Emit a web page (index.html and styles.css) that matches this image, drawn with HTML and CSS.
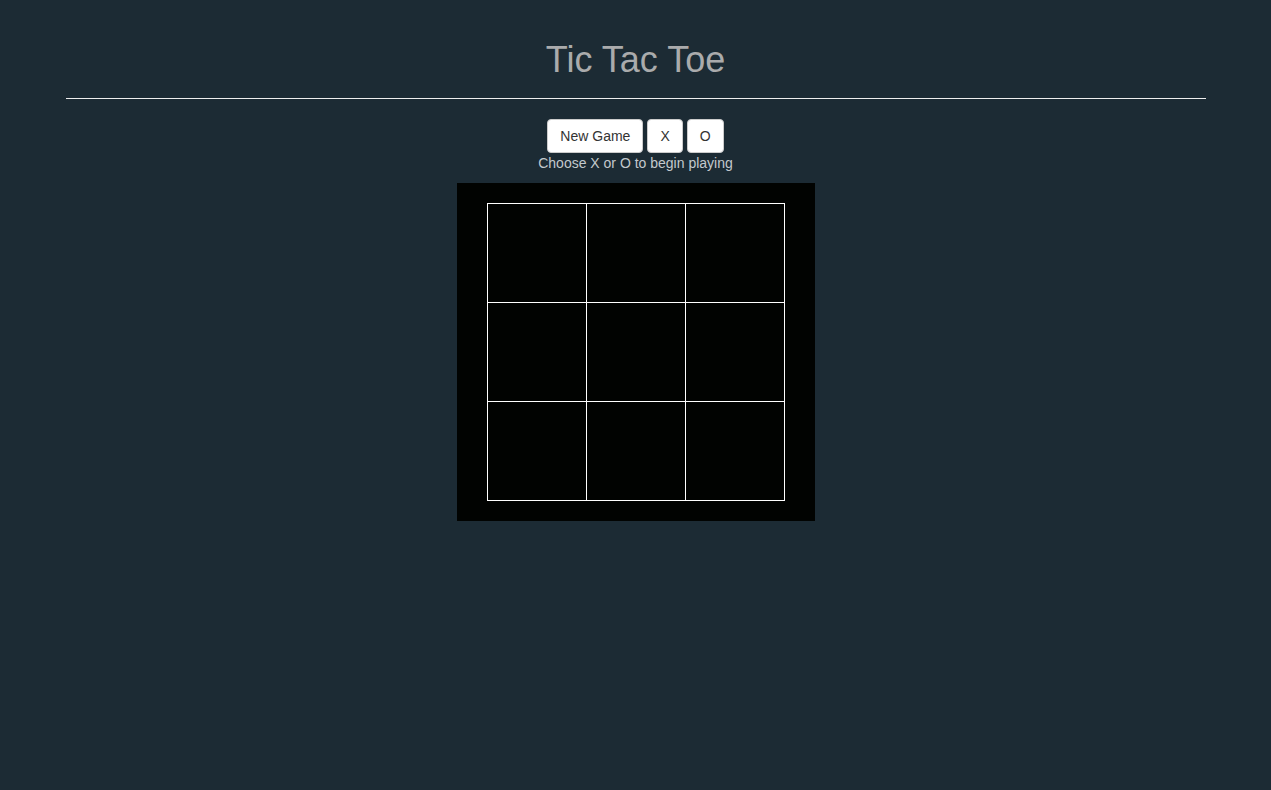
FILE: index.html
```html
<!DOCTYPE html>
<html>
<head>
<meta charset="utf-8">
<title>Tic Tac Toe</title>
<link rel="stylesheet" href="styles.css">
</head>
<body>
<div class="container">
  <h1 class="title">Tic Tac Toe</h1>
  <hr class="rule">
  <div class="controls">
    <button class="btn">New Game</button>
    <button class="btn">X</button>
    <button class="btn">O</button>
  </div>
  <p class="status">Choose X or O to begin playing</p>
  <div class="board">
    <table class="grid">
      <tr><td></td><td></td><td></td></tr>
      <tr><td></td><td></td><td></td></tr>
      <tr><td></td><td></td><td></td></tr>
    </table>
  </div>
</div>
</body>
</html>
```

FILE: styles.css
```css
html, body {
  margin: 0;
  padding: 0;
}
body {
  background: #1c2b34;
  font-family: "Liberation Sans", Arial, Helvetica, sans-serif;
  font-size: 14px;
  line-height: 20px;
  color: #333;
}
.container {
  width: 1140px;
  margin: 0 auto;
  text-align: center;
}
.title {
  margin: 40px 0 0;
  font-size: 36px;
  line-height: 40px;
  font-weight: 500;
  color: #aaabac;
}
.rule {
  margin: 18px 0 20px;
  border: 0;
  border-top: 1px solid #eeeeee;
  height: 0;
}
.controls {
  font-size: 0;
  display: flex;
  justify-content: center;
  gap: 4px;
}
.btn {
  font-family: "Liberation Sans", Arial, Helvetica, sans-serif;
  font-size: 14px;
  line-height: 20px;
  padding: 6px 12px;
  background: #fff;
  color: #333;
  border: 1px solid #ccc;
  border-radius: 4px;
  margin: 0;
  cursor: pointer;
}
.status {
  margin: 0;
  color: #c3c9cd;
  line-height: 20px;
}
.board {
  margin: 10px auto 0;
  width: 298px;
  padding: 20px 30px;
  background: #010301;
}
.grid {
  border-collapse: collapse;
  width: 298px;
}
.grid td {
  width: 98px;
  height: 98px;
  padding: 0;
  border: 1px solid #ffffff;
}
```
